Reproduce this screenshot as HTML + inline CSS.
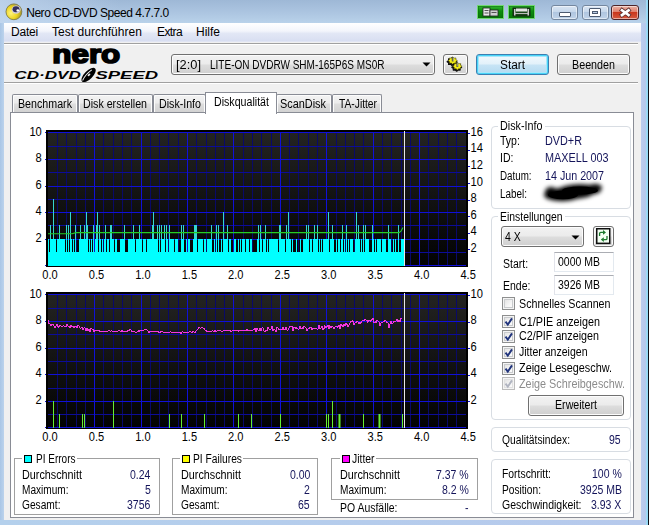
<!DOCTYPE html>
<html lang="de"><head><meta charset="utf-8"><title>Nero CD-DVD Speed 4.7.7.0</title>
<style>
html,body{margin:0;padding:0}
body{width:649px;height:525px;overflow:hidden;position:relative;background:#c0d5eb;font-family:"Liberation Sans",sans-serif}
.a{position:absolute;display:block}
.t{position:absolute;white-space:pre;font-family:"Liberation Sans",sans-serif;transform-origin:0 50%}
svg text{font-family:"Liberation Sans",sans-serif}
</style></head>
<body>
<div class="a" style="left:0;top:0;width:649px;height:525px;background:#b6cfea"></div>
<div class="a" style="left:0;top:0;width:649px;height:23px;background:linear-gradient(180deg,#9eb8d6 0,#abc4e0 50%,#b9d2ea 100%)"></div>
<div class="a" style="left:0;top:0;width:120px;height:23px;background:linear-gradient(90deg,rgba(196,216,240,.75) 0,rgba(196,216,240,.45) 35%,rgba(196,216,240,0) 100%)"></div>
<div class="a" style="left:641px;top:23px;width:5px;height:502px;background:linear-gradient(90deg,#bccdee 0,#b6c8ec 100%)"></div>
<div class="a" style="left:646px;top:0px;width:2px;height:525px;background:linear-gradient(90deg,#a4dcf4 0,#8fd6f6 100%)"></div>
<div class="a" style="left:648px;top:0px;width:1px;height:525px;background:#0c1018"></div>
<div class="a" style="left:0px;top:23px;width:4px;height:502px;background:linear-gradient(90deg,#a9c6e6 0,#bcd3ec 100%)"></div>
<div class="a" style="left:0px;top:520px;width:646px;height:5px;background:linear-gradient(90deg,#b4d0ec 0,#b6c9ec 100%)"></div>
<div class="a" style="left:4px;top:23px;width:637px;height:497px;background:#f0f0f0"></div>
<svg class="a" style="left:5px;top:3px" width="18" height="18" viewBox="0 0 18 18">
<defs><radialGradient id="ig" cx="32%" cy="58%" r="70%"><stop offset="0" stop-color="#fff47c"/><stop offset=".55" stop-color="#ecd422"/><stop offset="1" stop-color="#9c8f2c"/></radialGradient></defs>
<circle cx="8.9" cy="8.8" r="7.9" fill="url(#ig)" stroke="#7f7c46" stroke-width=".9"/>
<ellipse cx="11.2" cy="6.6" rx="4.5" ry="4.1" fill="#cfcbdc"/>
<ellipse cx="11" cy="6.3" rx="3.4" ry="3" fill="#34305c"/>
<circle cx="12.8" cy="7.5" r="1.35" fill="#fff"/>
</svg>
<span class="t" style="left:26.20px;top:6.00px;font-size:12px;line-height:14px;color:#000;letter-spacing:-0.463px;">Nero CD-DVD Speed 4.7.7.0</span>
<div class="a" style="left:477px;top:5px;width:27px;height:14px;background:linear-gradient(180deg,#2fb52f 0,#0c8c0c 45%,#087808 100%);border:1px solid #6fd86f;box-sizing:border-box;box-shadow:0 0 0 .5px #0a6a0a inset"></div>
<div class="a" style="left:508px;top:5px;width:27px;height:14px;background:linear-gradient(180deg,#2fb52f 0,#0c8c0c 45%,#087808 100%);border:1px solid #6fd86f;box-sizing:border-box;box-shadow:0 0 0 .5px #0a6a0a inset"></div>
<svg class="a" style="left:477px;top:5px" width="27" height="14" viewBox="0 0 27 14">
<rect x="6" y="3" width="7" height="8" fill="#e8e8e8" stroke="#222" stroke-width=".8"/><rect x="13" y="5" width="8" height="6" fill="#d0d0d0" stroke="#222" stroke-width=".8"/>
<rect x="7.5" y="5" width="4" height="1" fill="#555"/><rect x="7.5" y="7.5" width="4" height="1" fill="#555"/><rect x="14.5" y="7" width="5" height="1" fill="#555"/></svg>
<svg class="a" style="left:508px;top:5px" width="27" height="14" viewBox="0 0 27 14">
<rect x="5" y="3" width="17" height="8" fill="#1c4a1c" stroke="#111" stroke-width=".8"/><rect x="8" y="3.5" width="11" height="3" fill="#e4e4e4"/><rect x="6" y="8" width="15" height="1" fill="#bbb"/><rect x="6" y="4" width="1.5" height="6.5" fill="#ccc"/><rect x="19.5" y="4" width="1.5" height="6.5" fill="#ccc"/></svg>
<div class="a" style="left:551px;top:5px;width:27px;height:15px;background:linear-gradient(180deg,#d9e5f3 0,#c6d7eb 45%,#b0c6e0 50%,#c0d3e9 100%);border:1px solid #74879f;border-radius:3px;box-sizing:border-box;box-shadow:0 0 0 1px rgba(255,255,255,.5) inset"></div>
<div class="a" style="left:582px;top:5px;width:27px;height:15px;background:linear-gradient(180deg,#d9e5f3 0,#c6d7eb 45%,#b0c6e0 50%,#c0d3e9 100%);border:1px solid #74879f;border-radius:3px;box-sizing:border-box;box-shadow:0 0 0 1px rgba(255,255,255,.5) inset"></div>
<div class="a" style="left:611px;top:5px;width:28px;height:15px;background:linear-gradient(180deg,#eab3a6 0,#e07f6c 45%,#c9371d 50%,#d65a40 100%);border:1px solid #4d2428;border-radius:3px;box-sizing:border-box;box-shadow:0 0 0 1px rgba(255,255,255,.5) inset"></div>
<div class="a" style="left:559px;top:12px;width:12px;height:5px;background:#fff;border:1px solid #4c5a70;box-sizing:border-box;border-radius:1px"></div>
<div class="a" style="left:589px;top:8px;width:12px;height:9px;background:#fff;border:1px solid #4c5a70;box-sizing:border-box;border-radius:1px"></div>
<div class="a" style="left:592px;top:11px;width:6px;height:3px;background:#b9cbe2;border:1px solid #4c5a70;box-sizing:border-box"></div>
<svg class="a" style="left:617px;top:7px" width="16" height="11" viewBox="0 0 16 11"><path d="M5 3.3 L11.5 8 M11.5 3.3 L5 8" stroke="#5c3030" stroke-width="4.3" stroke-linecap="square"/><path d="M5 3.3 L11.5 8 M11.5 3.3 L5 8" stroke="#fff" stroke-width="2.7" stroke-linecap="square"/></svg>
<div class="a" style="left:4px;top:23px;width:637px;height:19px;background:linear-gradient(180deg,#ffffff 0,#f3f5fb 42%,#e2e7f5 55%,#d8def1 96%,#f2f3f8 100%)"></div>
<div class="a" style="left:4px;top:43px;width:634px;height:1px;background:#a0a0a0"></div>
<div class="a" style="left:4px;top:44px;width:634px;height:1px;background:#ffffff"></div>
<span class="t" style="left:11.00px;top:25.00px;font-size:12px;line-height:14px;color:#000;letter-spacing:-0.203px;">Datei</span>
<span class="t" style="left:52.00px;top:25.00px;font-size:12px;line-height:14px;color:#000;letter-spacing:0.038px;">Test durchführen</span>
<span class="t" style="left:157.00px;top:25.00px;font-size:12px;line-height:14px;color:#000;letter-spacing:-0.603px;">Extra</span>
<span class="t" style="left:196.00px;top:25.00px;font-size:12px;line-height:14px;color:#000;letter-spacing:-0.003px;">Hilfe</span>
<svg class="a" style="left:10px;top:44px" width="155" height="40" viewBox="0 0 155 40">
<text x="42.3" y="18.9" font-weight="bold" font-size="26.5" textLength="68" lengthAdjust="spacingAndGlyphs" stroke="#000" stroke-width="1.7" fill="#000">nero</text>
<text x="4.3" y="35.3" font-weight="bold" font-style="italic" font-size="11" textLength="66.5" lengthAdjust="spacingAndGlyphs" fill="#000">CD·DVD</text>
<text x="85.5" y="35.3" font-weight="bold" font-style="italic" font-size="11" textLength="62.5" lengthAdjust="spacingAndGlyphs" fill="#000">SPEED</text>
<g transform="rotate(-45 78.6 31)"><ellipse cx="78.6" cy="31" rx="9.2" ry="4.1" fill="#000"/>
<path d="M70.5 30.6 Q77 28.2 84.5 29.6" stroke="#f0f0f0" stroke-width="1" fill="none"/>
<ellipse cx="79" cy="31.2" rx="1.7" ry=".9" fill="#f0f0f0"/></g>
</svg>
<div class="a" style="left:171px;top:54px;width:264px;height:21px;box-sizing:border-box;border:1px solid #707070;border-radius:3px;background:linear-gradient(180deg,#f2f2f2 0,#ebebeb 48%,#dddddd 52%,#cfcfcf 100%);box-shadow:0 0 0 1px #fcfcfc inset"></div>
<span class="t" style="left:176.20px;top:58.00px;font-size:12px;line-height:14px;color:#000;transform:scaleX(1.0702);">[2:0]</span>
<span class="t" style="left:209.50px;top:58.00px;font-size:12px;line-height:14px;color:#000;transform:scaleX(0.8343);">LITE-ON DVDRW SHM-165P6S MS0R</span>
<svg class="a" style="left:422px;top:62px" width="9" height="5"><path d="M0.5 0.5 H8.5 L4.5 4.5 Z" fill="#000"/></svg>
<div class="a" style="left:443px;top:54px;width:25px;height:21px;box-sizing:border-box;border:1px solid #707070;border-radius:3px;background:linear-gradient(180deg,#f2f2f2 0,#ebebeb 48%,#dddddd 52%,#cfcfcf 100%);box-shadow:0 0 0 1px #fcfcfc inset"></div>
<svg class="a" style="left:443px;top:54px" width="25" height="21" viewBox="0 0 25 21"><polygon points="13.90,7.70 12.33,8.80 12.46,10.47 10.38,10.36 9.00,11.62 7.62,10.36 5.54,10.47 5.67,8.80 4.10,7.70 5.67,6.60 5.54,4.93 7.62,5.04 9.00,3.78 10.38,5.04 12.46,4.93 12.33,6.60" fill="#111" stroke="#111" stroke-width="1.2" stroke-linejoin="round"/><polygon points="14.40,6.60 12.84,7.64 13.02,9.26 11.00,9.11 9.70,10.36 8.40,9.11 6.38,9.26 6.56,7.64 5.00,6.60 6.56,5.56 6.38,3.94 8.40,4.09 9.70,2.84 11.00,4.09 13.02,3.94 12.84,5.56" fill="#f2ee1a" stroke="#3a3a00" stroke-width=".5" stroke-linejoin="round"/><rect x="8.80" y="3.00" width="1.7" height="4.4" fill="#3c3c28"/><rect x="9.70" y="3.40" width=".8" height="3.6" fill="#c8c8b0"/><polygon points="18.60,13.30 17.03,14.40 17.16,16.07 15.08,15.96 13.70,17.22 12.32,15.96 10.24,16.07 10.37,14.40 8.80,13.30 10.37,12.20 10.24,10.53 12.32,10.64 13.70,9.38 15.08,10.64 17.16,10.53 17.03,12.20" fill="#111" stroke="#111" stroke-width="1.2" stroke-linejoin="round"/><polygon points="19.10,12.20 17.54,13.24 17.72,14.86 15.70,14.71 14.40,15.96 13.10,14.71 11.08,14.86 11.26,13.24 9.70,12.20 11.26,11.16 11.08,9.54 13.10,9.69 14.40,8.44 15.70,9.69 17.72,9.54 17.54,11.16" fill="#f2ee1a" stroke="#3a3a00" stroke-width=".5" stroke-linejoin="round"/><rect x="13.50" y="8.60" width="1.7" height="4.4" fill="#3c3c28"/><rect x="14.40" y="9.00" width=".8" height="3.6" fill="#c8c8b0"/></svg>
<div class="a" style="left:476px;top:54px;width:73px;height:21px;box-sizing:border-box;border:1px solid #3c7fb1;border-radius:3px;background:linear-gradient(180deg,#f2f9fd 0,#e2f1fa 48%,#c7e4f5 52%,#b4daf1 100%);box-shadow:0 0 0 1px #47d4f8 inset,0 0 0 2px #a8e6fa inset"></div>
<span class="t" style="left:500.00px;top:58.00px;font-size:12px;line-height:14px;color:#000;transform:scaleX(0.9864);">Start</span>
<div class="a" style="left:557px;top:54px;width:73px;height:21px;box-sizing:border-box;border:1px solid #707070;border-radius:3px;background:linear-gradient(180deg,#f2f2f2 0,#ebebeb 48%,#dddddd 52%,#cfcfcf 100%);box-shadow:0 0 0 1px #fcfcfc inset"></div>
<span class="t" style="left:572.00px;top:58.00px;font-size:12px;line-height:14px;color:#000;transform:scaleX(0.8950);">Beenden</span>
<div class="a" style="left:4px;top:82px;width:634px;height:1px;background:#a0a0a0"></div>
<div class="a" style="left:4px;top:83px;width:634px;height:1px;background:#ffffff"></div>
<div class="a" style="left:10px;top:112px;width:624px;height:406px;box-sizing:border-box;border:1px solid #898c95;background:#fff"></div>
<div class="a" style="left:12px;top:94px;width:66px;height:18px;box-sizing:border-box;border:1px solid #898c95;border-bottom:none;border-radius:2px 2px 0 0;background:linear-gradient(180deg,#f3f3f3 0,#ececec 48%,#dedede 52%,#d2d2d2 100%);box-shadow:1px 1px 0 0 #fcfcfc inset, -1px 0 0 0 #fcfcfc inset"></div>
<span class="t" style="left:17.60px;top:97.00px;font-size:12px;line-height:14px;color:#000;transform:scaleX(0.8896);">Benchmark</span>
<div class="a" style="left:78px;top:94px;width:75px;height:18px;box-sizing:border-box;border:1px solid #898c95;border-bottom:none;border-radius:2px 2px 0 0;background:linear-gradient(180deg,#f3f3f3 0,#ececec 48%,#dedede 52%,#d2d2d2 100%);box-shadow:1px 1px 0 0 #fcfcfc inset, -1px 0 0 0 #fcfcfc inset"></div>
<span class="t" style="left:83.20px;top:97.00px;font-size:12px;line-height:14px;color:#000;transform:scaleX(0.8885);">Disk erstellen</span>
<div class="a" style="left:153px;top:94px;width:53px;height:18px;box-sizing:border-box;border:1px solid #898c95;border-bottom:none;border-radius:2px 2px 0 0;background:linear-gradient(180deg,#f3f3f3 0,#ececec 48%,#dedede 52%,#d2d2d2 100%);box-shadow:1px 1px 0 0 #fcfcfc inset, -1px 0 0 0 #fcfcfc inset"></div>
<span class="t" style="left:158.80px;top:97.00px;font-size:12px;line-height:14px;color:#000;transform:scaleX(0.8871);">Disk-Info</span>
<div class="a" style="left:276px;top:94px;width:56px;height:18px;box-sizing:border-box;border:1px solid #898c95;border-bottom:none;border-radius:2px 2px 0 0;background:linear-gradient(180deg,#f3f3f3 0,#ececec 48%,#dedede 52%,#d2d2d2 100%);box-shadow:1px 1px 0 0 #fcfcfc inset, -1px 0 0 0 #fcfcfc inset"></div>
<span class="t" style="left:279.80px;top:97.00px;font-size:12px;line-height:14px;color:#000;transform:scaleX(0.9075);">ScanDisk</span>
<div class="a" style="left:332px;top:94px;width:50px;height:18px;box-sizing:border-box;border:1px solid #898c95;border-bottom:none;border-radius:2px 2px 0 0;background:linear-gradient(180deg,#f3f3f3 0,#ececec 48%,#dedede 52%,#d2d2d2 100%);box-shadow:1px 1px 0 0 #fcfcfc inset, -1px 0 0 0 #fcfcfc inset"></div>
<span class="t" style="left:339.00px;top:97.00px;font-size:12px;line-height:14px;color:#000;transform:scaleX(0.8548);">TA-Jitter</span>
<div class="a" style="left:205px;top:92px;width:72px;height:22px;box-sizing:border-box;border:1px solid #898c95;border-bottom:none;background:#fff"></div>
<span class="t" style="left:213.80px;top:95.00px;font-size:12px;line-height:14px;color:#000;transform:scaleX(0.8866);">Diskqualität</span>
<svg class="a" style="left:0;top:118px" width="490" height="167" viewBox="0 118 490 167">
<defs><linearGradient id="g130" x1="0" y1="0" x2="0" y2="1"><stop offset="0" stop-color="#242422"/><stop offset=".45" stop-color="#141414"/><stop offset="1" stop-color="#020202"/></linearGradient></defs>
<rect x="46" y="130" width="422" height="137" fill="url(#g130)"/>
<path d="M57.5 130 V267 M66.5 130 V267 M76.5 130 V267 M85.5 130 V267 M103.5 130 V267 M113.5 130 V267 M122.5 130 V267 M131.5 130 V267 M150.5 130 V267 M159.5 130 V267 M168.5 130 V267 M178.5 130 V267 M196.5 130 V267 M206.5 130 V267 M215.5 130 V267 M224.5 130 V267 M243.5 130 V267 M252.5 130 V267 M261.5 130 V267 M271.5 130 V267 M289.5 130 V267 M298.5 130 V267 M308.5 130 V267 M317.5 130 V267 M336.5 130 V267 M345.5 130 V267 M354.5 130 V267 M363.5 130 V267 M382.5 130 V267 M391.5 130 V267 M401.5 130 V267 M410.5 130 V267 M428.5 130 V267 M438.5 130 V267 M447.5 130 V267 M456.5 130 V267" stroke="#090968" stroke-width="1" fill="none"/>
<path d="M46 252.5 H468 M46 225.5 H468 M46 199.5 H468 M46 172.5 H468 M46 146.5 H468" stroke="#0c0c98" stroke-width="1" fill="none"/>
<path d="M94.5 130 V267 M141.5 130 V267 M187.5 130 V267 M233.5 130 V267 M280.5 130 V267 M326.5 130 V267 M373.5 130 V267 M419.5 130 V267 M45 265.5 H468 M45 239.5 H468 M45 212.5 H468 M45 186.5 H468 M45 159.5 H468 M45 132.5 H468" stroke="#1010d8" stroke-width="1" fill="none"/>
<path d="M47 266.2V239h1V266.2zM48 266.2V239h1V266.2zM49 266.2V252h1V266.2zM50 266.2V239h1V266.2zM51 266.2V239h1V266.2zM52 266.2V239h1V266.2zM53 266.2V239h1V266.2zM54 266.2V239h1V266.2zM55 266.2V239h1V266.2zM56 266.2V252h1V266.2zM57 266.2V239h1V266.2zM58 266.2V239h1V266.2zM59 266.2V239h1V266.2zM60 266.2V239h1V266.2zM61 266.2V239h1V266.2zM62 266.2V239h1V266.2zM63 266.2V239h1V266.2zM64 266.2V239h1V266.2zM65 266.2V252h1V266.2zM66 266.2V239h1V266.2zM67 266.2V252h1V266.2zM68 266.2V239h1V266.2zM69 266.2V252h1V266.2zM70 266.2V239h1V266.2zM71 266.2V239h1V266.2zM72 266.2V252h1V266.2zM73 266.2V239h1V266.2zM74 266.2V252h1V266.2zM75 266.2V239h1V266.2zM76 266.2V252h1V266.2zM77 266.2V252h1V266.2zM78 266.2V252h1V266.2zM79 266.2V239h1V266.2zM80 266.2V239h1V266.2zM81 266.2V239h1V266.2zM82 266.2V239h1V266.2zM83 266.2V239h1V266.2zM84 266.2V239h1V266.2zM85 266.2V239h1V266.2zM86 266.2V239h1V266.2zM87 266.2V239h1V266.2zM88 266.2V252h1V266.2zM89 266.2V239h1V266.2zM90 266.2V252h1V266.2zM91 266.2V239h1V266.2zM92 266.2V252h1V266.2zM93 266.2V239h1V266.2zM94 266.2V252h1V266.2zM95 266.2V239h1V266.2zM96 266.2V239h1V266.2zM97 266.2V239h1V266.2zM98 266.2V252h1V266.2zM99 266.2V239h1V266.2zM100 266.2V239h1V266.2zM101 266.2V252h1V266.2zM102 266.2V239h1V266.2zM103 266.2V252h1V266.2zM104 266.2V239h1V266.2zM105 266.2V239h1V266.2zM106 266.2V252h1V266.2zM107 266.2V239h1V266.2zM108 266.2V239h1V266.2zM109 266.2V252h1V266.2zM110 266.2V239h1V266.2zM111 266.2V239h1V266.2zM112 266.2V239h1V266.2zM113 266.2V239h1V266.2zM114 266.2V252h1V266.2zM115 266.2V239h1V266.2zM116 266.2V239h1V266.2zM117 266.2V252h1V266.2zM118 266.2V252h1V266.2zM119 266.2V252h1V266.2zM120 266.2V239h1V266.2zM121 266.2V239h1V266.2zM122 266.2V239h1V266.2zM123 266.2V239h1V266.2zM124 266.2V239h1V266.2zM125 266.2V252h1V266.2zM126 266.2V252h1V266.2zM127 266.2V252h1V266.2zM128 266.2V239h1V266.2zM129 266.2V239h1V266.2zM130 266.2V239h1V266.2zM131 266.2V239h1V266.2zM132 266.2V239h1V266.2zM133 266.2V239h1V266.2zM134 266.2V239h1V266.2zM135 266.2V252h1V266.2zM136 266.2V239h1V266.2zM137 266.2V239h1V266.2zM138 266.2V239h1V266.2zM139 266.2V239h1V266.2zM140 266.2V239h1V266.2zM141 266.2V239h1V266.2zM142 266.2V252h1V266.2zM143 266.2V239h1V266.2zM144 266.2V239h1V266.2zM145 266.2V239h1V266.2zM146 266.2V252h1V266.2zM147 266.2V239h1V266.2zM148 266.2V239h1V266.2zM149 266.2V239h1V266.2zM150 266.2V239h1V266.2zM151 266.2V239h1V266.2zM152 266.2V239h1V266.2zM153 266.2V239h1V266.2zM154 266.2V239h1V266.2zM155 266.2V239h1V266.2zM156 266.2V239h1V266.2zM157 266.2V239h1V266.2zM158 266.2V252h1V266.2zM159 266.2V239h1V266.2zM160 266.2V252h1V266.2zM161 266.2V239h1V266.2zM162 266.2V239h1V266.2zM163 266.2V239h1V266.2zM164 266.2V239h1V266.2zM165 266.2V252h1V266.2zM166 266.2V239h1V266.2zM167 266.2V239h1V266.2zM168 266.2V252h1V266.2zM169 266.2V239h1V266.2zM170 266.2V239h1V266.2zM171 266.2V239h1V266.2zM172 266.2V239h1V266.2zM173 266.2V239h1V266.2zM174 266.2V252h1V266.2zM175 266.2V239h1V266.2zM176 266.2V239h1V266.2zM177 266.2V239h1V266.2zM178 266.2V252h1V266.2zM179 266.2V252h1V266.2zM180 266.2V252h1V266.2zM181 266.2V239h1V266.2zM182 266.2V239h1V266.2zM183 266.2V239h1V266.2zM184 266.2V252h1V266.2zM185 266.2V252h1V266.2zM186 266.2V239h1V266.2zM187 266.2V252h1V266.2zM188 266.2V239h1V266.2zM189 266.2V239h1V266.2zM190 266.2V252h1V266.2zM191 266.2V252h1V266.2zM192 266.2V252h1V266.2zM193 266.2V239h1V266.2zM194 266.2V239h1V266.2zM195 266.2V239h1V266.2zM196 266.2V239h1V266.2zM197 266.2V252h1V266.2zM198 266.2V239h1V266.2zM199 266.2V239h1V266.2zM200 266.2V239h1V266.2zM201 266.2V239h1V266.2zM202 266.2V239h1V266.2zM203 266.2V252h1V266.2zM204 266.2V239h1V266.2zM205 266.2V239h1V266.2zM206 266.2V252h1V266.2zM207 266.2V239h1V266.2zM208 266.2V239h1V266.2zM209 266.2V239h1V266.2zM210 266.2V239h1V266.2zM211 266.2V239h1V266.2zM212 266.2V252h1V266.2zM213 266.2V252h1V266.2zM214 266.2V239h1V266.2zM215 266.2V252h1V266.2zM216 266.2V239h1V266.2zM217 266.2V252h1V266.2zM218 266.2V239h1V266.2zM219 266.2V252h1V266.2zM220 266.2V252h1V266.2zM221 266.2V239h1V266.2zM222 266.2V252h1V266.2zM223 266.2V239h1V266.2zM224 266.2V239h1V266.2zM225 266.2V239h1V266.2zM226 266.2V239h1V266.2zM227 266.2V239h1V266.2zM228 266.2V252h1V266.2zM229 266.2V239h1V266.2zM230 266.2V239h1V266.2zM231 266.2V252h1V266.2zM232 266.2V252h1V266.2zM233 266.2V252h1V266.2zM234 266.2V239h1V266.2zM235 266.2V239h1V266.2zM236 266.2V252h1V266.2zM237 266.2V252h1V266.2zM238 266.2V239h1V266.2zM239 266.2V252h1V266.2zM240 266.2V239h1V266.2zM241 266.2V252h1V266.2zM242 266.2V239h1V266.2zM243 266.2V239h1V266.2zM244 266.2V239h1V266.2zM245 266.2V252h1V266.2zM246 266.2V239h1V266.2zM247 266.2V239h1V266.2zM248 266.2V239h1V266.2zM249 266.2V252h1V266.2zM250 266.2V239h1V266.2zM251 266.2V239h1V266.2zM252 266.2V252h1V266.2zM253 266.2V252h1V266.2zM254 266.2V252h1V266.2zM255 266.2V252h1V266.2zM256 266.2V252h1V266.2zM257 266.2V239h1V266.2zM258 266.2V239h1V266.2zM259 266.2V252h1V266.2zM260 266.2V239h1V266.2zM261 266.2V239h1V266.2zM262 266.2V252h1V266.2zM263 266.2V239h1V266.2zM264 266.2V239h1V266.2zM265 266.2V239h1V266.2zM266 266.2V252h1V266.2zM267 266.2V239h1V266.2zM268 266.2V252h1V266.2zM269 266.2V239h1V266.2zM270 266.2V239h1V266.2zM271 266.2V239h1V266.2zM272 266.2V239h1V266.2zM273 266.2V239h1V266.2zM274 266.2V239h1V266.2zM275 266.2V239h1V266.2zM276 266.2V239h1V266.2zM277 266.2V239h1V266.2zM278 266.2V252h1V266.2zM279 266.2V239h1V266.2zM280 266.2V239h1V266.2zM281 266.2V239h1V266.2zM282 266.2V239h1V266.2zM283 266.2V239h1V266.2zM284 266.2V239h1V266.2zM285 266.2V252h1V266.2zM286 266.2V239h1V266.2zM287 266.2V239h1V266.2zM288 266.2V239h1V266.2zM289 266.2V239h1V266.2zM290 266.2V239h1V266.2zM291 266.2V252h1V266.2zM292 266.2V239h1V266.2zM293 266.2V252h1V266.2zM294 266.2V252h1V266.2zM295 266.2V252h1V266.2zM296 266.2V239h1V266.2zM297 266.2V252h1V266.2zM298 266.2V252h1V266.2zM299 266.2V252h1V266.2zM300 266.2V239h1V266.2zM301 266.2V252h1V266.2zM302 266.2V252h1V266.2zM303 266.2V239h1V266.2zM304 266.2V239h1V266.2zM305 266.2V239h1V266.2zM306 266.2V239h1V266.2zM307 266.2V239h1V266.2zM308 266.2V239h1V266.2zM309 266.2V252h1V266.2zM310 266.2V239h1V266.2zM311 266.2V239h1V266.2zM312 266.2V252h1V266.2zM313 266.2V239h1V266.2zM314 266.2V239h1V266.2zM315 266.2V239h1V266.2zM316 266.2V239h1V266.2zM317 266.2V239h1V266.2zM318 266.2V252h1V266.2zM319 266.2V239h1V266.2zM320 266.2V252h1V266.2zM321 266.2V239h1V266.2zM322 266.2V252h1V266.2zM323 266.2V239h1V266.2zM324 266.2V239h1V266.2zM325 266.2V239h1V266.2zM326 266.2V239h1V266.2zM327 266.2V239h1V266.2zM328 266.2V239h1V266.2zM329 266.2V252h1V266.2zM330 266.2V239h1V266.2zM331 266.2V239h1V266.2zM332 266.2V239h1V266.2zM333 266.2V239h1V266.2zM334 266.2V252h1V266.2zM335 266.2V252h1V266.2zM336 266.2V239h1V266.2zM337 266.2V252h1V266.2zM338 266.2V239h1V266.2zM339 266.2V239h1V266.2zM340 266.2V252h1V266.2zM341 266.2V239h1V266.2zM342 266.2V239h1V266.2zM343 266.2V252h1V266.2zM344 266.2V239h1V266.2zM345 266.2V252h1V266.2zM346 266.2V239h1V266.2zM347 266.2V252h1V266.2zM348 266.2V239h1V266.2zM349 266.2V252h1V266.2zM350 266.2V239h1V266.2zM351 266.2V239h1V266.2zM352 266.2V239h1V266.2zM353 266.2V252h1V266.2zM354 266.2V252h1V266.2zM355 266.2V239h1V266.2zM356 266.2V239h1V266.2zM357 266.2V239h1V266.2zM358 266.2V239h1V266.2zM359 266.2V239h1V266.2zM360 266.2V252h1V266.2zM361 266.2V239h1V266.2zM362 266.2V252h1V266.2zM363 266.2V239h1V266.2zM364 266.2V252h1V266.2zM365 266.2V239h1V266.2zM366 266.2V239h1V266.2zM367 266.2V239h1V266.2zM368 266.2V239h1V266.2zM369 266.2V252h1V266.2zM370 266.2V252h1V266.2zM371 266.2V252h1V266.2zM372 266.2V239h1V266.2zM373 266.2V239h1V266.2zM374 266.2V252h1V266.2zM375 266.2V239h1V266.2zM376 266.2V252h1V266.2zM377 266.2V239h1V266.2zM378 266.2V239h1V266.2zM379 266.2V239h1V266.2zM380 266.2V239h1V266.2zM381 266.2V252h1V266.2zM382 266.2V239h1V266.2zM383 266.2V239h1V266.2zM384 266.2V239h1V266.2zM385 266.2V239h1V266.2zM386 266.2V252h1V266.2zM387 266.2V252h1V266.2zM388 266.2V239h1V266.2zM389 266.2V239h1V266.2zM390 266.2V239h1V266.2zM391 266.2V252h1V266.2zM392 266.2V252h1V266.2zM393 266.2V239h1V266.2zM394 266.2V252h1V266.2zM395 266.2V239h1V266.2zM396 266.2V252h1V266.2zM397 266.2V252h1V266.2zM398 266.2V239h1V266.2zM399 266.2V252h1V266.2zM400 266.2V252h1V266.2zM401 266.2V239h1V266.2zM402 266.2V239h1V266.2zM403 266.2V239h1V266.2z" fill="#00ffff"/><path d="M50 239V225h1V239zM53 239V199h1V239zM59 239V225h1V239zM66 239V225h1V239zM68 239V225h1V239zM70 239V212h1V239zM75 239V225h1V239zM80 239V225h1V239zM84 239V225h1V239zM86 239V212h1V239zM87 239V225h1V239zM93 239V225h1V239zM96 239V225h1V239zM97 239V212h1V239zM99 239V225h1V239zM105 239V225h1V239zM110 239V225h1V239zM111 239V225h1V239zM124 239V225h1V239zM133 239V225h1V239zM139 239V225h1V239zM152 239V225h1V239zM153 239V212h1V239zM157 239V225h1V239zM159 239V225h1V239zM161 239V225h1V239zM164 239V225h1V239zM166 239V225h1V239zM169 239V225h1V239zM181 239V225h1V239zM183 239V225h1V239zM194 239V225h1V239zM195 239V225h1V239zM196 239V225h1V239zM211 239V225h1V239zM216 239V225h1V239zM218 239V225h1V239zM223 239V212h1V239zM227 239V225h1V239zM258 239V225h1V239zM260 239V225h1V239zM265 239V225h1V239zM279 239V225h1V239zM280 239V225h1V239zM286 239V225h1V239zM288 239V212h1V239zM306 239V225h1V239zM308 239V225h1V239zM314 239V225h1V239zM317 239V225h1V239zM328 239V212h1V239zM332 239V225h1V239zM342 239V225h1V239zM346 239V225h1V239zM356 239V212h1V239zM358 239V225h1V239zM363 239V225h1V239zM365 239V225h1V239zM372 239V225h1V239zM388 239V225h1V239zM398 239V225h1V239z" fill="#35d6d0"/><path d="M47.5 233.8 L72 233.8 L76 232.6 L399 232.6 L401 231.1 L403 227.6" stroke="#26cc26" stroke-width="1.1" fill="none"/>
<path d="M46 130H468V267H46Z M48 132V266H466V132Z" fill="#000" fill-rule="evenodd"/>
<rect x="404" y="131" width="1" height="135" fill="#e8e8e8"/>
<text x="41.8" y="242.0" font-size="12" text-anchor="end" textLength="6.2" lengthAdjust="spacingAndGlyphs" fill="#000">2</text>
<text x="41.8" y="215.4" font-size="12" text-anchor="end" textLength="6.2" lengthAdjust="spacingAndGlyphs" fill="#000">4</text>
<text x="41.8" y="188.8" font-size="12" text-anchor="end" textLength="6.2" lengthAdjust="spacingAndGlyphs" fill="#000">6</text>
<text x="41.8" y="162.2" font-size="12" text-anchor="end" textLength="6.2" lengthAdjust="spacingAndGlyphs" fill="#000">8</text>
<text x="41.8" y="135.6" font-size="12" text-anchor="end" textLength="12.4" lengthAdjust="spacingAndGlyphs" fill="#000">10</text>
<text x="470.6" y="252.0" font-size="12" textLength="6.2" lengthAdjust="spacingAndGlyphs" fill="#000">2</text>
<rect x="468" y="249" width="2" height="1" fill="#1010d0"/>
<text x="470.6" y="235.4" font-size="12" textLength="6.2" lengthAdjust="spacingAndGlyphs" fill="#000">4</text>
<rect x="468" y="233" width="2" height="1" fill="#1010d0"/>
<text x="470.6" y="218.7" font-size="12" textLength="6.2" lengthAdjust="spacingAndGlyphs" fill="#000">6</text>
<rect x="468" y="216" width="2" height="1" fill="#1010d0"/>
<text x="470.6" y="202.1" font-size="12" textLength="6.2" lengthAdjust="spacingAndGlyphs" fill="#000">8</text>
<rect x="468" y="200" width="2" height="1" fill="#1010d0"/>
<text x="470.6" y="185.5" font-size="12" textLength="12.4" lengthAdjust="spacingAndGlyphs" fill="#000">10</text>
<rect x="468" y="183" width="2" height="1" fill="#1010d0"/>
<text x="470.6" y="168.9" font-size="12" textLength="12.4" lengthAdjust="spacingAndGlyphs" fill="#000">12</text>
<rect x="468" y="166" width="2" height="1" fill="#1010d0"/>
<text x="470.6" y="152.3" font-size="12" textLength="12.4" lengthAdjust="spacingAndGlyphs" fill="#000">14</text>
<rect x="468" y="150" width="2" height="1" fill="#1010d0"/>
<text x="470.6" y="135.6" font-size="12" textLength="12.4" lengthAdjust="spacingAndGlyphs" fill="#000">16</text>
<rect x="468" y="133" width="2" height="1" fill="#1010d0"/>
<text x="50.0" y="279.0" font-size="12" text-anchor="middle" textLength="15.4" lengthAdjust="spacingAndGlyphs" fill="#000">0.0</text>
<text x="96.5" y="279.0" font-size="12" text-anchor="middle" textLength="15.4" lengthAdjust="spacingAndGlyphs" fill="#000">0.5</text>
<text x="142.9" y="279.0" font-size="12" text-anchor="middle" textLength="15.4" lengthAdjust="spacingAndGlyphs" fill="#000">1.0</text>
<text x="189.4" y="279.0" font-size="12" text-anchor="middle" textLength="15.4" lengthAdjust="spacingAndGlyphs" fill="#000">1.5</text>
<text x="235.8" y="279.0" font-size="12" text-anchor="middle" textLength="15.4" lengthAdjust="spacingAndGlyphs" fill="#000">2.0</text>
<text x="282.2" y="279.0" font-size="12" text-anchor="middle" textLength="15.4" lengthAdjust="spacingAndGlyphs" fill="#000">2.5</text>
<text x="328.7" y="279.0" font-size="12" text-anchor="middle" textLength="15.4" lengthAdjust="spacingAndGlyphs" fill="#000">3.0</text>
<text x="375.2" y="279.0" font-size="12" text-anchor="middle" textLength="15.4" lengthAdjust="spacingAndGlyphs" fill="#000">3.5</text>
<text x="421.6" y="279.0" font-size="12" text-anchor="middle" textLength="15.4" lengthAdjust="spacingAndGlyphs" fill="#000">4.0</text>
<text x="468.1" y="279.0" font-size="12" text-anchor="middle" textLength="15.4" lengthAdjust="spacingAndGlyphs" fill="#000">4.5</text>
</svg>
<svg class="a" style="left:0;top:280px" width="490" height="167" viewBox="0 280 490 167">
<defs><linearGradient id="g292" x1="0" y1="0" x2="0" y2="1"><stop offset="0" stop-color="#242422"/><stop offset=".45" stop-color="#141414"/><stop offset="1" stop-color="#020202"/></linearGradient></defs>
<rect x="46" y="292" width="422" height="137" fill="url(#g292)"/>
<path d="M57.5 292 V429 M66.5 292 V429 M76.5 292 V429 M85.5 292 V429 M103.5 292 V429 M113.5 292 V429 M122.5 292 V429 M131.5 292 V429 M150.5 292 V429 M159.5 292 V429 M168.5 292 V429 M178.5 292 V429 M196.5 292 V429 M206.5 292 V429 M215.5 292 V429 M224.5 292 V429 M243.5 292 V429 M252.5 292 V429 M261.5 292 V429 M271.5 292 V429 M289.5 292 V429 M298.5 292 V429 M308.5 292 V429 M317.5 292 V429 M336.5 292 V429 M345.5 292 V429 M354.5 292 V429 M363.5 292 V429 M382.5 292 V429 M391.5 292 V429 M401.5 292 V429 M410.5 292 V429 M428.5 292 V429 M438.5 292 V429 M447.5 292 V429 M456.5 292 V429" stroke="#090968" stroke-width="1" fill="none"/>
<path d="M46 414.5 H468 M46 388.5 H468 M46 361.5 H468 M46 334.5 H468 M46 308.5 H468" stroke="#0c0c98" stroke-width="1" fill="none"/>
<path d="M94.5 292 V429 M141.5 292 V429 M187.5 292 V429 M233.5 292 V429 M280.5 292 V429 M326.5 292 V429 M373.5 292 V429 M419.5 292 V429 M45 427.5 H468 M45 401.5 H468 M45 374.5 H468 M45 348.5 H468 M45 321.5 H468 M45 294.5 H468" stroke="#1010d8" stroke-width="1" fill="none"/>
<path d="M53 428.2V401h1V428.2zM59 428.2V414h1V428.2zM82 428.2V414h1V428.2zM84 428.2V414h1V428.2zM113 428.2V401h1V428.2zM169 428.2V414h1V428.2zM181 428.2V414h1V428.2zM204 428.2V414h1V428.2zM238 428.2V414h1V428.2zM251 428.2V414h1V428.2zM280 428.2V414h1V428.2zM326 428.2V414h1V428.2zM328 428.2V414h1V428.2zM332 428.2V401h1V428.2zM338.5 428.2V414h2V428.2zM363 428.2V414h1V428.2zM378.5 428.2V414h2V428.2zM402 428.2V414h1V428.2z" fill="#66ee33"/><polyline points="48.0,320.5 49.0,324.0 50.0,323.9 51.0,325.5 52.0,324.3 53.0,324.2 54.0,325.8 55.0,327.4 56.0,326.2 57.0,324.1 58.0,327.3 59.0,326.7 60.0,325.7 61.0,326.0 62.0,326.0 63.0,326.0 64.0,325.8 65.0,326.8 66.0,327.0 67.0,324.5 68.0,326.1 69.0,326.0 70.0,327.8 71.0,325.4 72.0,326.5 73.0,326.3 74.0,327.5 75.0,326.2 76.0,326.5 77.0,327.8 78.0,325.5 79.0,326.0 80.0,328.1 81.0,328.0 82.0,327.3 83.0,329.6 84.0,327.9 85.0,327.6 86.0,330.5 87.0,328.2 88.0,331.0 89.0,328.9 90.0,331.6 91.0,328.2 92.0,329.3 93.0,329.0 94.0,331.4 95.0,330.1 96.0,330.4 97.0,330.3 98.0,330.9 99.0,330.7 100.0,331.7 101.0,331.8 102.0,331.3 103.0,331.9 104.0,331.6 105.0,331.6 106.0,331.4 107.0,331.9 108.0,331.0 109.0,330.6 110.0,331.0 111.0,331.0 112.0,330.8 113.0,332.1 114.0,330.9 115.0,331.4 116.0,330.9 117.0,331.8 118.0,331.1 119.0,330.9 120.0,330.9 121.0,331.5 122.0,330.6 123.0,332.0 124.0,331.8 125.0,331.6 126.0,331.4 127.0,331.9 128.0,330.5 129.0,330.7 130.0,329.6 131.0,329.8 132.0,331.4 133.0,331.8 134.0,331.7 135.0,332.1 136.0,332.4 137.0,332.1 138.0,331.3 139.0,330.8 140.0,331.2 141.0,330.0 142.0,331.1 143.0,330.7 144.0,330.3 145.0,329.2 146.0,329.9 147.0,330.0 148.0,330.9 149.0,332.4 150.0,331.5 151.0,331.1 152.0,331.3 153.0,332.0 154.0,331.7 155.0,331.9 156.0,331.8 157.0,331.5 158.0,331.5 159.0,332.5 160.0,332.3 161.0,331.5 162.0,331.4 163.0,332.0 164.0,332.4 165.0,332.7 166.0,332.1 167.0,332.6 168.0,332.1 169.0,332.4 170.0,331.9 171.0,331.9 172.0,332.6 173.0,332.5 174.0,332.7 175.0,332.6 176.0,332.4 177.0,332.9 178.0,332.0 179.0,333.1 180.0,332.4 181.0,333.4 182.0,332.1 183.0,331.9 184.0,332.9 185.0,331.9 186.0,333.0 187.0,332.2 188.0,332.0 189.0,332.0 190.0,331.7 191.0,332.1 192.0,332.3 193.0,331.5 194.0,332.0 195.0,333.1 196.0,331.3 197.0,329.7 198.0,328.8 199.0,327.3 200.0,328.1 201.0,328.0 202.0,327.4 203.0,327.9 204.0,328.2 205.0,329.9 206.0,330.2 207.0,331.4 208.0,331.2 209.0,331.3 210.0,331.0 211.0,331.7 212.0,331.0 213.0,330.8 214.0,331.9 215.0,330.6 216.0,331.7 217.0,331.1 218.0,330.8 219.0,331.0 220.0,330.1 221.0,331.0 222.0,331.1 223.0,331.0 224.0,330.6 225.0,330.9 226.0,330.8 227.0,331.0 228.0,330.9 229.0,331.0 230.0,330.4 231.0,331.8 232.0,331.3 233.0,329.9 234.0,330.4 235.0,330.5 236.0,330.4 237.0,329.9 238.0,331.2 239.0,330.8 240.0,330.0 241.0,331.1 242.0,330.5 243.0,330.4 244.0,329.9 245.0,330.9 246.0,330.4 247.0,329.6 248.0,330.9 249.0,330.8 250.0,330.4 251.0,329.9 252.0,330.3 253.0,330.1 254.0,329.4 255.0,328.1 256.0,331.9 257.0,328.2 258.0,330.0 259.0,330.9 260.0,327.7 261.0,330.7 262.0,327.8 263.0,327.6 264.0,331.4 265.0,332.2 266.0,330.1 267.0,330.9 268.0,327.1 269.0,329.0 270.0,329.1 271.0,329.1 272.0,326.5 273.0,331.3 274.0,328.8 275.0,329.9 276.0,331.6 277.0,326.8 278.0,328.0 279.0,329.9 280.0,329.4 281.0,328.9 282.0,330.3 283.0,327.5 284.0,330.2 285.0,329.6 286.0,326.9 287.0,330.3 288.0,330.1 289.0,327.9 290.0,326.4 291.0,327.2 292.0,326.0 293.0,331.1 294.0,327.0 295.0,327.7 296.0,328.5 297.0,327.7 298.0,328.8 299.0,329.5 300.0,325.8 301.0,329.1 302.0,327.7 303.0,328.8 304.0,325.8 305.0,326.9 306.0,328.2 307.0,330.8 308.0,328.9 309.0,328.4 310.0,327.5 311.0,327.5 312.0,330.2 313.0,328.0 314.0,328.0 315.0,328.7 316.0,328.3 317.0,329.0 318.0,329.0 319.0,325.5 320.0,328.8 321.0,328.0 322.0,326.2 323.0,329.7 324.0,328.5 325.0,325.6 326.0,327.8 327.0,326.4 328.0,325.2 329.0,329.0 330.0,325.6 331.0,328.2 332.0,326.2 333.0,327.1 334.0,329.0 335.0,327.3 336.0,326.1 337.0,327.2 338.0,326.8 339.0,325.5 340.0,328.7 341.0,324.3 342.0,325.6 343.0,326.7 344.0,323.9 345.0,325.8 346.0,323.0 347.0,324.6 348.0,326.5 349.0,324.8 350.0,323.2 351.0,320.9 352.0,321.5 353.0,320.7 354.0,325.3 355.0,322.9 356.0,322.4 357.0,320.9 358.0,322.0 359.0,323.8 360.0,322.5 361.0,323.3 362.0,321.0 363.0,320.5 364.0,320.3 365.0,319.5 366.0,320.2 367.0,320.6 368.0,322.4 369.0,320.4 370.0,320.6 371.0,321.4 372.0,319.4 373.0,318.2 374.0,323.2 375.0,321.7 376.0,322.5 377.0,320.6 378.0,320.9 379.0,321.7 380.0,325.5 381.0,322.8 382.0,322.1 383.0,322.1 384.0,321.7 385.0,320.3 386.0,320.8 387.0,322.6 388.0,323.1 389.0,327.7 390.0,324.0 391.0,320.9 392.0,323.4 393.0,323.2 394.0,321.3 395.0,321.4 396.0,321.3 397.0,318.8 398.0,322.4 399.0,319.8 400.0,321.6 401.0,318.0 402.0,319.1" stroke="#f436e0" stroke-width="1" fill="none" shape-rendering="crispEdges"/>
<path d="M46 292H468V429H46Z M48 294V428H466V294Z" fill="#000" fill-rule="evenodd"/>
<rect x="404" y="293" width="1" height="135" fill="#e8e8e8"/>
<text x="41.8" y="404.0" font-size="12" text-anchor="end" textLength="6.2" lengthAdjust="spacingAndGlyphs" fill="#000">2</text>
<text x="41.8" y="377.4" font-size="12" text-anchor="end" textLength="6.2" lengthAdjust="spacingAndGlyphs" fill="#000">4</text>
<text x="41.8" y="350.8" font-size="12" text-anchor="end" textLength="6.2" lengthAdjust="spacingAndGlyphs" fill="#000">6</text>
<text x="41.8" y="324.2" font-size="12" text-anchor="end" textLength="6.2" lengthAdjust="spacingAndGlyphs" fill="#000">8</text>
<text x="41.8" y="297.6" font-size="12" text-anchor="end" textLength="12.4" lengthAdjust="spacingAndGlyphs" fill="#000">10</text>
<text x="470.6" y="404.0" font-size="12" textLength="6.2" lengthAdjust="spacingAndGlyphs" fill="#000">2</text>
<rect x="468" y="401" width="2" height="1" fill="#1010d0"/>
<text x="470.6" y="377.4" font-size="12" textLength="6.2" lengthAdjust="spacingAndGlyphs" fill="#000">4</text>
<rect x="468" y="375" width="2" height="1" fill="#1010d0"/>
<text x="470.6" y="350.8" font-size="12" textLength="6.2" lengthAdjust="spacingAndGlyphs" fill="#000">6</text>
<rect x="468" y="348" width="2" height="1" fill="#1010d0"/>
<text x="470.6" y="324.2" font-size="12" textLength="6.2" lengthAdjust="spacingAndGlyphs" fill="#000">8</text>
<rect x="468" y="322" width="2" height="1" fill="#1010d0"/>
<text x="470.6" y="297.6" font-size="12" textLength="12.4" lengthAdjust="spacingAndGlyphs" fill="#000">10</text>
<rect x="468" y="295" width="2" height="1" fill="#1010d0"/>
<text x="50.0" y="441.0" font-size="12" text-anchor="middle" textLength="15.4" lengthAdjust="spacingAndGlyphs" fill="#000">0.0</text>
<text x="96.5" y="441.0" font-size="12" text-anchor="middle" textLength="15.4" lengthAdjust="spacingAndGlyphs" fill="#000">0.5</text>
<text x="142.9" y="441.0" font-size="12" text-anchor="middle" textLength="15.4" lengthAdjust="spacingAndGlyphs" fill="#000">1.0</text>
<text x="189.4" y="441.0" font-size="12" text-anchor="middle" textLength="15.4" lengthAdjust="spacingAndGlyphs" fill="#000">1.5</text>
<text x="235.8" y="441.0" font-size="12" text-anchor="middle" textLength="15.4" lengthAdjust="spacingAndGlyphs" fill="#000">2.0</text>
<text x="282.2" y="441.0" font-size="12" text-anchor="middle" textLength="15.4" lengthAdjust="spacingAndGlyphs" fill="#000">2.5</text>
<text x="328.7" y="441.0" font-size="12" text-anchor="middle" textLength="15.4" lengthAdjust="spacingAndGlyphs" fill="#000">3.0</text>
<text x="375.2" y="441.0" font-size="12" text-anchor="middle" textLength="15.4" lengthAdjust="spacingAndGlyphs" fill="#000">3.5</text>
<text x="421.6" y="441.0" font-size="12" text-anchor="middle" textLength="15.4" lengthAdjust="spacingAndGlyphs" fill="#000">4.0</text>
<text x="468.1" y="441.0" font-size="12" text-anchor="middle" textLength="15.4" lengthAdjust="spacingAndGlyphs" fill="#000">4.5</text>
</svg>
<div class="a" style="left:491px;top:126px;width:140px;height:83px;box-sizing:border-box;border:1px solid #d8dde3;border-radius:4px;background:#fff"></div>
<div class="a" style="left:498px;top:125px;width:46.5px;height:3px;background:#fff"></div>
<span class="t" style="left:500.00px;top:119.00px;font-size:12px;line-height:14px;color:#000;transform:scaleX(0.8977);">Disk-Info</span>
<span class="t" style="left:500.00px;top:134.00px;font-size:12px;line-height:14px;color:#000;transform:scaleX(0.8750);">Typ:</span>
<span class="t" style="left:544.70px;top:134.00px;font-size:12px;line-height:14px;color:#14145a;transform:scaleX(0.9021);">DVD+R</span>
<span class="t" style="left:500.00px;top:151.00px;font-size:12px;line-height:14px;color:#000;transform:scaleX(0.8750);">ID:</span>
<span class="t" style="left:544.70px;top:151.00px;font-size:12px;line-height:14px;color:#14145a;transform:scaleX(0.9037);">MAXELL 003</span>
<span class="t" style="left:500.00px;top:169.00px;font-size:12px;line-height:14px;color:#000;transform:scaleX(0.8142);">Datum:</span>
<span class="t" style="left:545.00px;top:169.00px;font-size:12px;line-height:14px;color:#14145a;transform:scaleX(0.8931);">14 Jun 2007</span>
<span class="t" style="left:500.00px;top:187.00px;font-size:12px;line-height:14px;color:#000;transform:scaleX(0.8256);">Label:</span>
<svg class="a" style="left:525px;top:172px" width="100" height="42" viewBox="0 0 100 42"><defs><filter id="bl" x="-20%" y="-50%" width="140%" height="200%"><feGaussianBlur stdDeviation="2.1"/></filter></defs>
<g filter="url(#bl)" fill="#000"><ellipse cx="37" cy="23" rx="18" ry="6.2"/><ellipse cx="55" cy="18" rx="21" ry="5.8"/><ellipse cx="46" cy="21" rx="22" ry="6"/><ellipse cx="70" cy="15.5" rx="7" ry="3.6"/><ellipse cx="26" cy="20" rx="6" ry="5"/></g>
<g fill="#000"><ellipse cx="38" cy="23" rx="15" ry="4.2"/><ellipse cx="55" cy="18.5" rx="18" ry="4"/></g></svg>
<div class="a" style="left:491px;top:216px;width:140px;height:204px;box-sizing:border-box;border:1px solid #d8dde3;border-radius:4px;background:#fff"></div>
<div class="a" style="left:498.2px;top:215px;width:66.5px;height:3px;background:#fff"></div>
<span class="t" style="left:500.20px;top:210.00px;font-size:12px;line-height:14px;color:#000;transform:scaleX(0.8673);">Einstellungen</span>
<div class="a" style="left:501px;top:226px;width:83px;height:21px;box-sizing:border-box;border:1px solid #707070;border-radius:3px;background:linear-gradient(180deg,#f2f2f2 0,#ebebeb 48%,#dddddd 52%,#cfcfcf 100%);box-shadow:0 0 0 1px #fcfcfc inset"></div>
<span class="t" style="left:505.00px;top:230.00px;font-size:12px;line-height:14px;color:#000;transform:scaleX(0.8750);">4 X</span>
<svg class="a" style="left:571px;top:235px" width="9" height="5"><path d="M0.5 0.5 H8.5 L4.5 4.5 Z" fill="#000"/></svg>
<div class="a" style="left:593px;top:226px;width:21px;height:21px;box-sizing:border-box;border:1px solid #707070;border-radius:3px;background:linear-gradient(180deg,#f2f2f2 0,#ebebeb 48%,#dddddd 52%,#cfcfcf 100%);box-shadow:0 0 0 1px #fcfcfc inset"></div>
<svg class="a" style="left:596px;top:228px" width="15" height="17" viewBox="0 0 15 17">
<rect x=".75" y=".75" width="13" height="14.6" fill="#f3fff3" stroke="#101010" stroke-width="1.5"/>
<path d="M3.6 8 V5.6 Q3.6 4.4 4.8 4.4 H7.4" stroke="#1b7a2c" stroke-width="1.3" fill="none"/><path d="M7 2.1 L10 4.4 L7 6.7Z" fill="#1b7a2c"/>
<path d="M11 8 V10.4 Q11 11.6 9.8 11.6 H7.4" stroke="#1b7a2c" stroke-width="1.3" fill="none"/><path d="M7.8 9.3 L4.8 11.6 L7.8 13.9Z" fill="#1b7a2c"/>
</svg>
<span class="t" style="left:502.50px;top:257.00px;font-size:12px;line-height:14px;color:#000;transform:scaleX(0.8750);">Start:</span>
<div class="a" style="left:554px;top:252px;width:60px;height:20px;box-sizing:border-box;border:1px solid #e3e9ef;border-top-color:#abadb3;border-left-color:#e2e3ea;background:#fff"></div>
<span class="t" style="left:558.00px;top:255.00px;font-size:12px;line-height:14px;color:#000;transform:scaleX(0.8744);">0000 MB</span>
<span class="t" style="left:502.50px;top:279.00px;font-size:12px;line-height:14px;color:#000;transform:scaleX(0.8750);">Ende:</span>
<div class="a" style="left:554px;top:275px;width:60px;height:20px;box-sizing:border-box;border:1px solid #e3e9ef;border-top-color:#abadb3;border-left-color:#e2e3ea;background:#fff"></div>
<span class="t" style="left:558.00px;top:278.00px;font-size:12px;line-height:14px;color:#000;transform:scaleX(0.8744);">3926 MB</span>
<div class="a" style="left:502px;top:297px;width:13px;height:13px;box-sizing:border-box;border:1px solid #8e8f8f;background:linear-gradient(135deg,#dcdcdc 0,#f6f6f6 60%,#fff 100%);box-shadow:0 0 0 1px #f4f4f4 inset, 0 0 0 2px #c9cbcd inset"></div>
<span class="t" style="left:518.50px;top:297.00px;font-size:12px;line-height:14px;color:#000;transform:scaleX(0.8905);">Schnelles Scannen</span>
<div class="a" style="left:502px;top:315px;width:13px;height:13px;box-sizing:border-box;border:1px solid #8e8f8f;background:linear-gradient(135deg,#dcdcdc 0,#f6f6f6 60%,#fff 100%);box-shadow:0 0 0 1px #f4f4f4 inset, 0 0 0 2px #c9cbcd inset"></div>
<svg class="a" style="left:504px;top:316.5px" width="10" height="10" viewBox="0 0 10 10"><path d="M1.5 4.6 L3.8 7.6 L8 1.4" stroke="#21347c" stroke-width="1.9" fill="none"/></svg>
<span class="t" style="left:518.50px;top:315.00px;font-size:12px;line-height:14px;color:#000;transform:scaleX(0.8994);">C1/PIE anzeigen</span>
<div class="a" style="left:502px;top:330px;width:13px;height:13px;box-sizing:border-box;border:1px solid #8e8f8f;background:linear-gradient(135deg,#dcdcdc 0,#f6f6f6 60%,#fff 100%);box-shadow:0 0 0 1px #f4f4f4 inset, 0 0 0 2px #c9cbcd inset"></div>
<svg class="a" style="left:504px;top:331.5px" width="10" height="10" viewBox="0 0 10 10"><path d="M1.5 4.6 L3.8 7.6 L8 1.4" stroke="#21347c" stroke-width="1.9" fill="none"/></svg>
<span class="t" style="left:518.50px;top:329.00px;font-size:12px;line-height:14px;color:#000;transform:scaleX(0.8949);">C2/PIF anzeigen</span>
<div class="a" style="left:502px;top:346px;width:13px;height:13px;box-sizing:border-box;border:1px solid #8e8f8f;background:linear-gradient(135deg,#dcdcdc 0,#f6f6f6 60%,#fff 100%);box-shadow:0 0 0 1px #f4f4f4 inset, 0 0 0 2px #c9cbcd inset"></div>
<svg class="a" style="left:504px;top:347.5px" width="10" height="10" viewBox="0 0 10 10"><path d="M1.5 4.6 L3.8 7.6 L8 1.4" stroke="#21347c" stroke-width="1.9" fill="none"/></svg>
<span class="t" style="left:518.50px;top:345.00px;font-size:12px;line-height:14px;color:#000;transform:scaleX(0.8777);">Jitter anzeigen</span>
<div class="a" style="left:502px;top:362px;width:13px;height:13px;box-sizing:border-box;border:1px solid #8e8f8f;background:linear-gradient(135deg,#dcdcdc 0,#f6f6f6 60%,#fff 100%);box-shadow:0 0 0 1px #f4f4f4 inset, 0 0 0 2px #c9cbcd inset"></div>
<svg class="a" style="left:504px;top:363.5px" width="10" height="10" viewBox="0 0 10 10"><path d="M1.5 4.6 L3.8 7.6 L8 1.4" stroke="#21347c" stroke-width="1.9" fill="none"/></svg>
<span class="t" style="left:518.50px;top:361.00px;font-size:12px;line-height:14px;color:#000;transform:scaleX(0.9052);">Zeige Lesegeschw.</span>
<div class="a" style="left:502px;top:377px;width:13px;height:13px;box-sizing:border-box;border:1px solid #bcbcbc;background:linear-gradient(135deg,#dcdcdc 0,#f6f6f6 60%,#fff 100%);box-shadow:0 0 0 1px #f4f4f4 inset, 0 0 0 2px #e0e0e0 inset"></div>
<svg class="a" style="left:504px;top:378.5px" width="10" height="10" viewBox="0 0 10 10"><path d="M1.5 4.6 L3.8 7.6 L8 1.4" stroke="#b0b4c0" stroke-width="1.9" fill="none"/></svg>
<span class="t" style="left:518.50px;top:377.00px;font-size:12px;line-height:14px;color:#8c8c8c;transform:scaleX(0.9028);">Zeige Schreibgeschw.</span>
<div class="a" style="left:528px;top:395px;width:96px;height:21px;box-sizing:border-box;border:1px solid #707070;border-radius:3px;background:linear-gradient(180deg,#f2f2f2 0,#ebebeb 48%,#dddddd 52%,#cfcfcf 100%);box-shadow:0 0 0 1px #fcfcfc inset"></div>
<span class="t" style="left:555.00px;top:398.00px;font-size:12px;line-height:14px;color:#000;transform:scaleX(0.8871);">Erweitert</span>
<div class="a" style="left:491px;top:427px;width:140px;height:25px;box-sizing:border-box;border:1px solid #d8dde3;border-radius:4px;background:#fff"></div>
<span class="t" style="left:502.00px;top:433.00px;font-size:12px;line-height:14px;color:#000;transform:scaleX(0.8565);">Qualitätsindex:</span>
<span class="t" style="left:608.81px;top:433.00px;font-size:12px;line-height:14px;color:#14145a;transform:scaleX(0.8750);">95</span>
<div class="a" style="left:491px;top:459px;width:140px;height:55px;box-sizing:border-box;border:1px solid #d8dde3;border-radius:4px;background:#fff"></div>
<span class="t" style="left:502.00px;top:467.00px;font-size:12px;line-height:14px;color:#000;transform:scaleX(0.8646);">Fortschritt:</span>
<span class="t" style="left:591.72px;top:467.00px;font-size:12px;line-height:14px;color:#14145a;transform:scaleX(0.8750);">100 %</span>
<span class="t" style="left:502.00px;top:483.00px;font-size:12px;line-height:14px;color:#000;transform:scaleX(0.8473);">Position:</span>
<span class="t" style="left:579.50px;top:483.00px;font-size:12px;line-height:14px;color:#14145a;transform:scaleX(0.8744);">3925 MB</span>
<span class="t" style="left:502.00px;top:498.00px;font-size:12px;line-height:14px;color:#000;transform:scaleX(0.8763);">Geschwindigkeit:</span>
<span class="t" style="left:591.13px;top:498.00px;font-size:12px;line-height:14px;color:#14145a;transform:scaleX(0.8750);">3.93 X</span>
<div class="a" style="left:14px;top:458px;width:146px;height:57px;box-sizing:border-box;border:1px solid #a0a0a0;background:#fff"></div>
<div class="a" style="left:22px;top:457px;width:54.5px;height:3px;background:#fff"></div>
<div class="a" style="left:24px;top:455px;width:8px;height:8px;box-sizing:border-box;border:1px solid #000;background:#00ffff"></div>
<span class="t" style="left:35.50px;top:452.00px;font-size:12px;line-height:14px;color:#000;transform:scaleX(0.8343);">PI Errors</span>
<span class="t" style="left:21.70px;top:468.00px;font-size:12px;line-height:14px;color:#000;transform:scaleX(0.8995);">Durchschnitt</span>
<span class="t" style="left:130.26px;top:468.00px;font-size:12px;line-height:14px;color:#14145a;transform:scaleX(0.8750);">0.24</span>
<span class="t" style="left:21.70px;top:483.00px;font-size:12px;line-height:14px;color:#000;transform:scaleX(0.8402);">Maximum:</span>
<span class="t" style="left:144.85px;top:483.00px;font-size:12px;line-height:14px;color:#14145a;transform:scaleX(0.8750);">5</span>
<span class="t" style="left:21.70px;top:498.00px;font-size:12px;line-height:14px;color:#000;transform:scaleX(0.8488);">Gesamt:</span>
<span class="t" style="left:127.33px;top:498.00px;font-size:12px;line-height:14px;color:#14145a;transform:scaleX(0.8750);">3756</span>
<div class="a" style="left:172px;top:458px;width:146px;height:57px;box-sizing:border-box;border:1px solid #a0a0a0;background:#fff"></div>
<div class="a" style="left:180.2px;top:457px;width:63.3px;height:3px;background:#fff"></div>
<div class="a" style="left:182.2px;top:455px;width:8px;height:8px;box-sizing:border-box;border:1px solid #000;background:#ffff00"></div>
<span class="t" style="left:193.00px;top:452.00px;font-size:12px;line-height:14px;color:#000;transform:scaleX(0.8543);">PI Failures</span>
<span class="t" style="left:180.70px;top:468.00px;font-size:12px;line-height:14px;color:#000;transform:scaleX(0.8995);">Durchschnitt</span>
<span class="t" style="left:289.56px;top:468.00px;font-size:12px;line-height:14px;color:#14145a;transform:scaleX(0.8750);">0.00</span>
<span class="t" style="left:180.70px;top:483.00px;font-size:12px;line-height:14px;color:#000;transform:scaleX(0.8402);">Maximum:</span>
<span class="t" style="left:304.15px;top:483.00px;font-size:12px;line-height:14px;color:#14145a;transform:scaleX(0.8750);">2</span>
<span class="t" style="left:180.70px;top:498.00px;font-size:12px;line-height:14px;color:#000;transform:scaleX(0.8488);">Gesamt:</span>
<span class="t" style="left:298.31px;top:498.00px;font-size:12px;line-height:14px;color:#14145a;transform:scaleX(0.8750);">65</span>
<div class="a" style="left:331px;top:458px;width:147px;height:42px;box-sizing:border-box;border:1px solid #a0a0a0;background:#fff"></div>
<div class="a" style="left:339.5px;top:457px;width:36.5px;height:3px;background:#fff"></div>
<div class="a" style="left:341.5px;top:455px;width:8px;height:8px;box-sizing:border-box;border:1px solid #000;background:#ff00ff"></div>
<span class="t" style="left:352.00px;top:452.00px;font-size:12px;line-height:14px;color:#000;transform:scaleX(0.8649);">Jitter</span>
<span class="t" style="left:339.70px;top:468.00px;font-size:12px;line-height:14px;color:#000;transform:scaleX(0.8995);">Durchschnitt</span>
<span class="t" style="left:435.81px;top:468.00px;font-size:12px;line-height:14px;color:#14145a;transform:scaleX(0.8750);">7.37 %</span>
<span class="t" style="left:339.70px;top:483.00px;font-size:12px;line-height:14px;color:#000;transform:scaleX(0.8402);">Maximum:</span>
<span class="t" style="left:441.65px;top:483.00px;font-size:12px;line-height:14px;color:#14145a;transform:scaleX(0.8750);">8.2 %</span>
<span class="t" style="left:339.70px;top:501.00px;font-size:12px;line-height:14px;color:#000;transform:scaleX(0.8706);">PO Ausfälle:</span>
<span class="t" style="left:465.00px;top:501.00px;font-size:12px;line-height:14px;color:#14145a;transform:scaleX(0.8750);">-</span>
</body></html>
